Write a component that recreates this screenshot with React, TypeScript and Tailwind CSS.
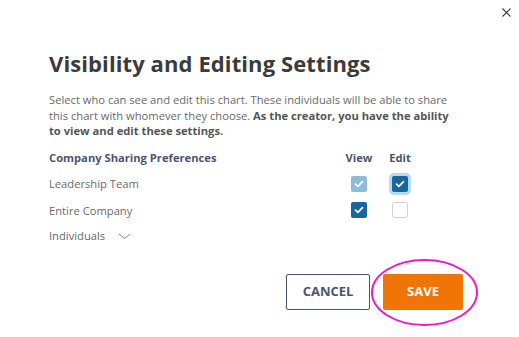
import React from "react";

function Check() {
  return (
    <svg width="10" height="8" viewBox="0 0 10 8" fill="none">
      <path d="M1.5 4.2 L3.9 6.4 L8.5 1.6" stroke="white" strokeWidth="1.8" strokeLinecap="round" strokeLinejoin="round" />
    </svg>
  );
}

function Box({ kind }: { kind: "light" | "dark" | "focus" | "empty" }) {
  if (kind === "empty") {
    return <div className="w-[16px] h-[16px] rounded-[2px] border border-[#d4d4d4] bg-white" />;
  }
  const bg = kind === "light" ? "bg-[#8fbbdb]" : "bg-[#17679f]";
  const ring = kind === "focus" ? "ring-[3px] ring-[#b9d9f0]" : "";
  return (
    <div className={`w-[16px] h-[16px] rounded-[2px] flex items-center justify-center ${bg} ${ring}`}>
      <Check />
    </div>
  );
}

export default function App() {
  return (
    <div
      className="relative w-[519px] h-[337px] bg-white overflow-hidden"
      style={{ fontFamily: '"Open Sans", sans-serif' }}
    >
      <svg className="absolute left-[502px] top-[8px]" width="9" height="9" viewBox="0 0 9 9">
        <path d="M0.5 0.5 L8.5 8.5 M8.5 0.5 L0.5 8.5" stroke="#3c3c3c" strokeWidth="1.1" />
      </svg>

      <div className="pl-[49px] pt-[48px] flex flex-col">
        <h1 className="text-[22px] leading-[30px] font-bold text-[#3b3b3b] tracking-[0.1px]">
          Visibility and Editing Settings
        </h1>
        <p className="mt-[14px] w-[404px] text-[11.2px] leading-[15.5px] text-[#6a6a6a]">
          Select who can see and edit this chart. These individuals will be able to share this chart with whomever they choose.{" "}
          <span className="font-bold text-[#555]">As the creator, you have the ability to view and edit these settings.</span>
        </p>

        <div className="mt-[8px] grid grid-cols-[290px_40px_42px] text-[11.2px]">
          <div className="h-[24px] flex items-center font-bold text-[#4b5472]">Company Sharing Preferences</div>
          <div className="h-[24px] flex items-center justify-center font-bold text-[#4b5472]">View</div>
          <div className="h-[24px] flex items-center justify-center font-bold text-[#4b5472]">Edit</div>

          <div className="h-[26px] flex items-center text-[#6a6a6a] pt-[2px]">Leadership Team</div>
          <div className="h-[26px] flex items-center justify-center"><Box kind="light" /></div>
          <div className="h-[26px] flex items-center justify-center"><Box kind="focus" /></div>

          <div className="h-[27px] flex items-center text-[#6a6a6a] pt-[2px]">Entire Company</div>
          <div className="h-[27px] flex items-center justify-center"><Box kind="dark" /></div>
          <div className="h-[27px] flex items-center justify-center"><Box kind="empty" /></div>

          <div className="h-[26px] flex items-center text-[#6a6a6a] col-span-3 gap-[13px]">
            <span>Individuals</span>
            <svg width="13" height="7" viewBox="0 0 13 7" fill="none">
              <path d="M1 1 L6.5 5.5 L12 1" stroke="#8a8a8a" strokeWidth="1" />
            </svg>
          </div>
        </div>

        <div className="mt-[24px] flex justify-end gap-[13px] pr-[56px]">
          <button className="w-[84px] h-[36px] border border-[#4b5472] rounded-[2px] text-[13px] font-bold text-[#4b5472] bg-white">
            CANCEL
          </button>
          <button className="w-[80px] h-[36px] rounded-[2px] text-[13px] font-bold text-white bg-[#f07406]">
            SAVE
          </button>
        </div>
      </div>

      <svg className="absolute left-[370px] top-[258px]" width="110" height="70" viewBox="0 0 110 70">
        <ellipse cx="54.5" cy="34.5" rx="52.5" ry="32.5" fill="none" stroke="#ee18c8" strokeWidth="2" />
      </svg>
    </div>
  );
}
